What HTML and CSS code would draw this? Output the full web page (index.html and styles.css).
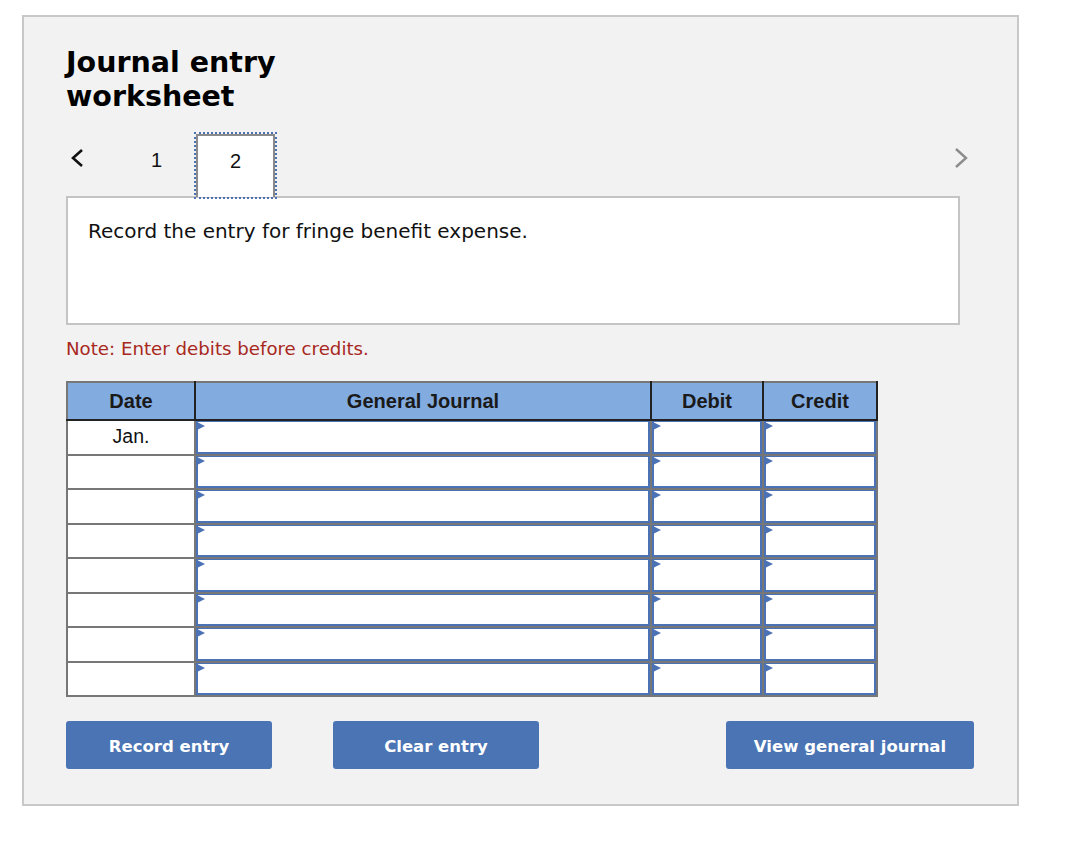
FILE: index.html
```html
<!DOCTYPE html>
<html lang="en">
<head>
<meta charset="utf-8">
<title>Journal entry worksheet</title>
<link rel="stylesheet" href="styles.css">
</head>
<body>
<div class="panel">
  <h1 class="title">Journal entry<br>worksheet</h1>

  <div class="tabs">
    <button class="nav prev" aria-label="Previous">
      <svg width="16" height="20" viewBox="0 0 16 20"><path d="M13 2 L4 10 L13 18" fill="none" stroke="#111" stroke-width="2.6"/></svg>
    </button>
    <div class="tab">1</div>
    <div class="tab active">2</div>
    <button class="nav next" aria-label="Next">
      <svg width="16" height="22" viewBox="0 0 16 22"><path d="M3 2 L13 11 L3 20" fill="none" stroke="#8c8c8c" stroke-width="2.4"/></svg>
    </button>
  </div>

  <div class="prompt">Record the entry for fringe benefit expense.</div>

  <p class="note">Note: Enter debits before credits.</p>

  <table class="journal">
    <thead>
      <tr>
        <th class="c-date">Date</th>
        <th class="c-gj">General Journal</th>
        <th class="c-dr">Debit</th>
        <th class="c-cr">Credit</th>
      </tr>
    </thead>
    <tbody>
      <tr><td class="date">Jan.</td><td class="in"><div class="field"></div></td><td class="in"><div class="field"></div></td><td class="in"><div class="field"></div></td></tr>
      <tr><td class="date"></td><td class="in"><div class="field"></div></td><td class="in"><div class="field"></div></td><td class="in"><div class="field"></div></td></tr>
      <tr><td class="date"></td><td class="in"><div class="field"></div></td><td class="in"><div class="field"></div></td><td class="in"><div class="field"></div></td></tr>
      <tr><td class="date"></td><td class="in"><div class="field"></div></td><td class="in"><div class="field"></div></td><td class="in"><div class="field"></div></td></tr>
      <tr><td class="date"></td><td class="in"><div class="field"></div></td><td class="in"><div class="field"></div></td><td class="in"><div class="field"></div></td></tr>
      <tr><td class="date"></td><td class="in"><div class="field"></div></td><td class="in"><div class="field"></div></td><td class="in"><div class="field"></div></td></tr>
      <tr><td class="date"></td><td class="in"><div class="field"></div></td><td class="in"><div class="field"></div></td><td class="in"><div class="field"></div></td></tr>
      <tr><td class="date"></td><td class="in"><div class="field"></div></td><td class="in"><div class="field"></div></td><td class="in"><div class="field"></div></td></tr>
    </tbody>
  </table>

  <div class="actions">
    <button class="btn">Record entry</button>
    <button class="btn">Clear entry</button>
    <button class="btn wide">View general journal</button>
  </div>
</div>
</body>
</html>
```

FILE: styles.css
```css
html, body {
  margin: 0;
  padding: 0;
  background: #ffffff;
}

body {
  padding: 15px 0 0 22px;
  font-family: "DejaVu Sans", Verdana, sans-serif;
  color: #111;
}

.panel {
  box-sizing: border-box;
  width: 997px;
  height: 791px;
  background: #f2f2f2;
  border: 2px solid #c8c8c8;
  padding: 29px 43px 0 42px;
}

.title {
  margin: 0;
  font-size: 28.5px;
  line-height: 34px;
  font-weight: bold;
  color: #000;
}

.tabs {
  display: flex;
  align-items: flex-start;
  height: 64px;
  margin-top: 19px;
  position: relative;
  z-index: 1;
}

.nav {
  border: 0;
  background: transparent;
  padding: 0;
  cursor: pointer;
  display: flex;
}

.prev {
  width: 52px;
  padding: 15px 0 0 3px;
}

.next {
  margin-left: auto;
  margin-right: 5px;
  padding-top: 14px;
}

.tab {
  box-sizing: border-box;
  width: 77px;
  height: 64px;
  text-align: center;
  font-family: "Liberation Sans", Arial, sans-serif;
  font-size: 20px;
  line-height: 22px;
  padding-top: 16px;
  color: #111;
}

.tab.active {
  width: 79px;
  margin-left: 1px;
  margin-top: 1px;
  height: 63px;
  background: #fff;
  border: 2px solid #8a8a8a;
  border-bottom: 0;
  padding-top: 14px;
  outline: 2px dotted #4a72b5;
  outline-offset: 0;
}

.prompt {
  box-sizing: border-box;
  width: 894px;
  height: 129px;
  margin-top: -1px;
  background: #fff;
  border: 2px solid #c4c4c4;
  padding: 21px 0 0 20px;
  font-size: 20px;
  line-height: 24px;
  color: #111;
}

.note {
  margin: 13px 0 0 0;
  font-size: 18.2px;
  line-height: 22px;
  color: #a8281e;
}

.journal {
  margin-top: 21px;
  border-collapse: collapse;
  table-layout: fixed;
  width: 810px;
  font-family: "Liberation Sans", Arial, sans-serif;
}

.journal th {
  height: 36px;
  padding: 0;
  background: #82abe0;
  font-size: 20px;
  font-weight: bold;
  color: #1a1a1a;
  border: 2px solid #222;
  border-top-color: #777;
}

.journal th.c-date {
  border-left-color: #777;
}

.c-date { width: 126px; }
.c-gj { width: 454px; }
.c-dr { width: 110px; }
.c-cr { width: 112px; }

.journal td {
  height: 32.5px;
  padding: 0;
  background: #fff;
  border: 2px solid #777;
  vertical-align: top;
}

.journal td.date {
  text-align: center;
  vertical-align: top;
  font-size: 19.5px;
  line-height: 30px;
  color: #111;
}

.field {
  position: relative;
  box-sizing: border-box;
  height: 32.5px;
  border: 2px solid #4a72b5;
  border-top-width: 1px;
  background: #fff;
}

.field::before {
  content: "";
  position: absolute;
  left: -1px;
  top: 0;
  border-left: 8px solid #4a72b5;
  border-top: 4.5px solid transparent;
  border-bottom: 4.5px solid transparent;
}

.actions {
  display: flex;
  gap: 61px;
  margin-top: 24px;
}

.btn {
  box-sizing: border-box;
  width: 206px;
  height: 48px;
  border: 0;
  border-radius: 3px;
  background: #4a74b4;
  color: #fff;
  font-family: "DejaVu Sans", Verdana, sans-serif;
  font-size: 16.5px;
  font-weight: bold;
  cursor: pointer;
  padding: 3px 0 0 0;
}

.btn.wide {
  width: 248px;
  margin-left: auto;
}
```
